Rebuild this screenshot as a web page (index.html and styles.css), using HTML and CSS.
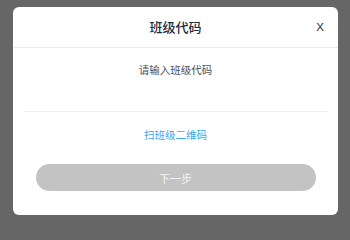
FILE: index.html
```html
<!DOCTYPE html>
<html lang="zh-CN">
<head>
<meta charset="utf-8">
<title>班级代码</title>
<link rel="stylesheet" href="styles.css">
</head>
<body>
<div class="dialog">
  <div class="dialog-header">
    <span class="spacer"></span>
    <h1 class="dialog-title">班级代码</h1>
    <button class="close-btn" type="button">X</button>
  </div>
  <div class="dialog-body">
    <input class="code-input" type="text" placeholder="请输入班级代码">
    <a class="scan-link" href="#">扫班级二维码</a>
    <button class="next-btn" type="button">下一步</button>
  </div>
</div>
</body>
</html>
```
FILE: styles.css
```css
html, body {
  margin: 0;
  padding: 0;
}
body {
  background: #666666;
  font-family: "Noto Sans CJK SC", "Noto Sans", sans-serif;
  padding: 7px 12px 0 13px;
}
.dialog {
  width: 325px;
  height: 208px;
  background: #ffffff;
  border-radius: 6px;
  display: flex;
  flex-direction: column;
  box-sizing: border-box;
}
.dialog-header {
  height: 41px;
  box-sizing: border-box;
  border-bottom: 1px solid #ebebeb;
  display: grid;
  grid-template-columns: 1fr auto 1fr;
  align-items: center;
}
.dialog-title {
  margin: 0;
  font-size: 13px;
  font-weight: 500;
  color: #1f2a3c;
  line-height: 16px;
}
.close-btn {
  justify-self: end;
  margin-right: 14px;
  border: none;
  background: none;
  padding: 0;
  font-family: "Liberation Sans", Arial, sans-serif;
  font-size: 11.5px;
  line-height: 12px;
  color: #1f2a44;
  cursor: pointer;
}
.dialog-body {
  display: flex;
  flex-direction: column;
  align-items: center;
  padding: 0 11px 23px;
}
.code-input {
  width: 100%;
  box-sizing: border-box;
  height: 64px;
  padding: 14px 0 35px;
  border: none;
  border-bottom: 1px solid #eeeeee;
  font-family: "Noto Sans CJK SC", sans-serif;
  font-size: 10.5px;
  line-height: 14px;
  text-align: center;
  color: #333;
  outline: none;
  background: transparent;
}
.code-input::placeholder {
  color: #4a4f5a;
}
.scan-link {
  margin-top: 16px;
  font-size: 10.5px;
  line-height: 14px;
  color: #3aa6f2;
  text-decoration: none;
}
.next-btn {
  margin-top: 22px;
  width: 280px;
  height: 27px;
  border: none;
  border-radius: 14px;
  background: #c3c3c3;
  color: #f4f4f4;
  font-family: "Noto Sans CJK SC", sans-serif;
  font-size: 11px;
  padding: 0;
  cursor: pointer;
}
```
